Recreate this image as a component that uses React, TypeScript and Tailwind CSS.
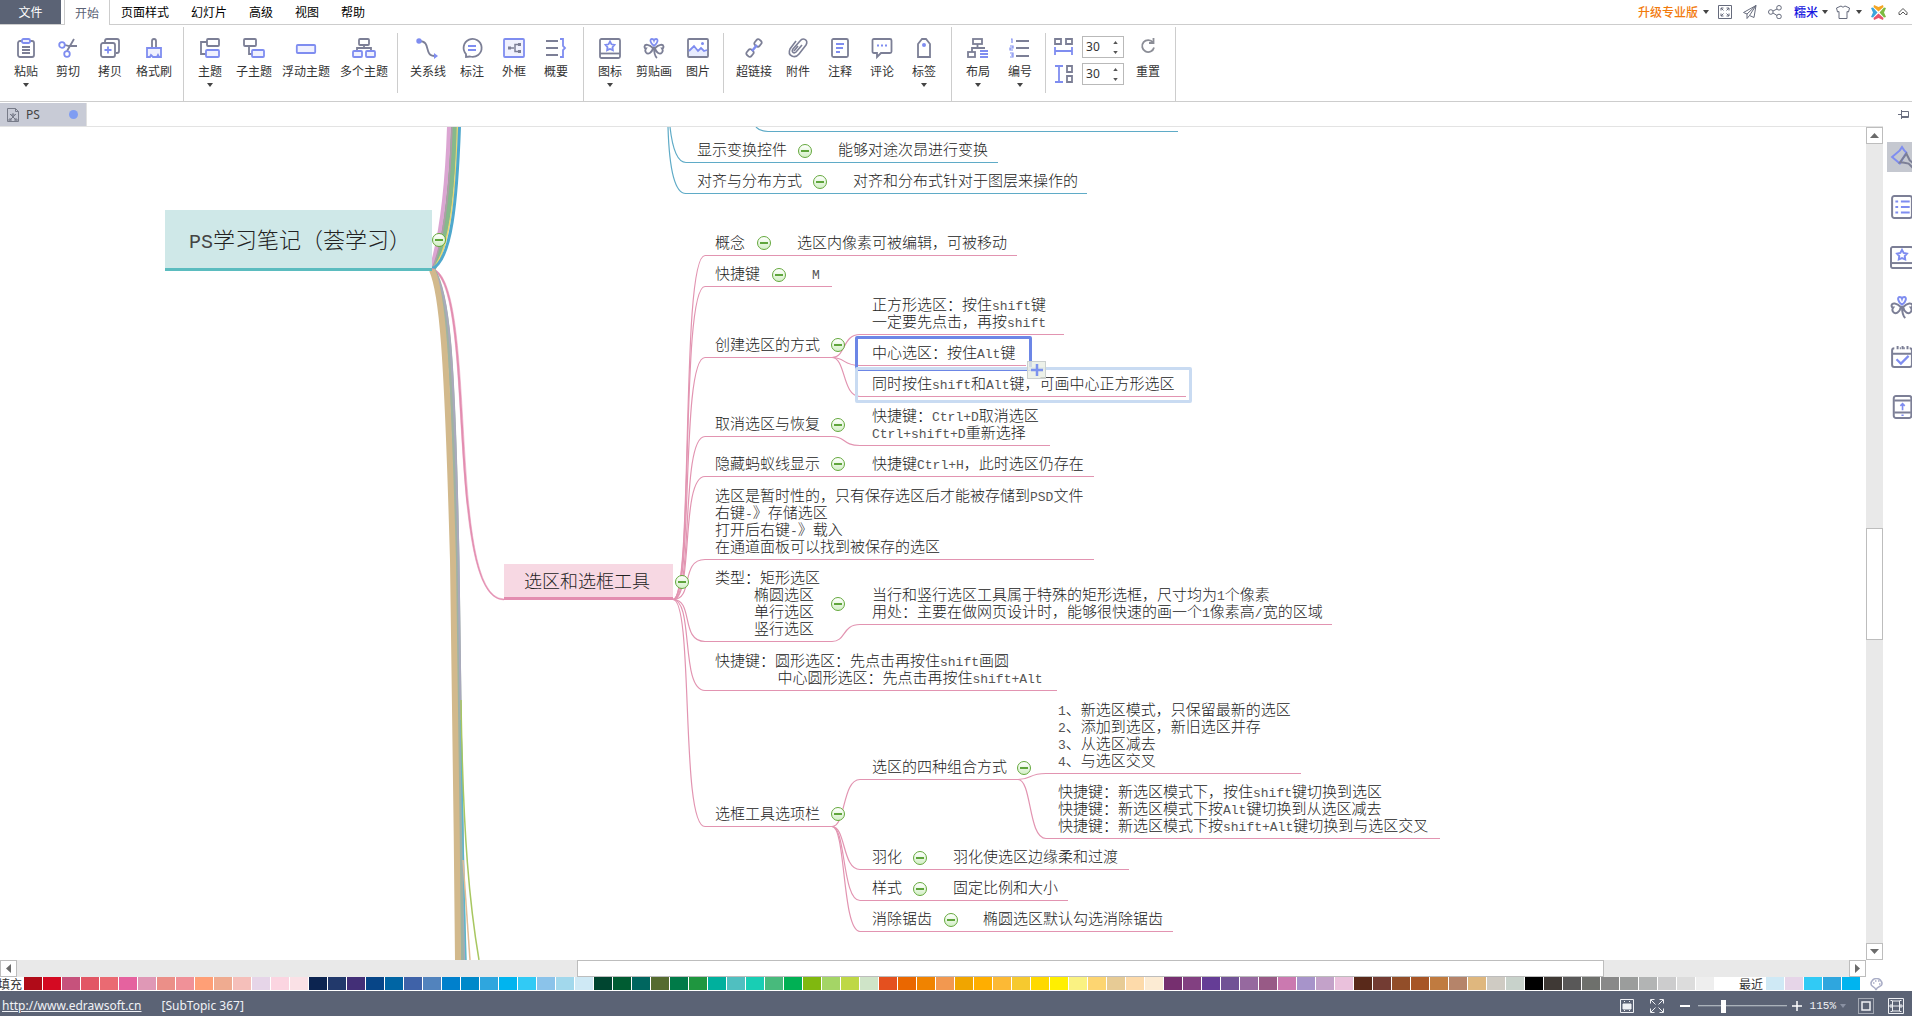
import { ReactNode } from "react";

const icons: Record<string, ReactNode> = {
  paste: (
    <>
      <rect x="2" y="3" width="16" height="16" rx="2" />
      <rect x="6" y="1" width="8" height="4" rx="1.5" fill="#f0f1fe" stroke="#7f8df0" />
      <path d="M6 9h8M6 12h8M6 15h8" />
    </>
  ),
  cut: (
    <>
      <path d="M16 1 9 13M19 8H11L7 7" />
      <circle cx="4" cy="7" r="2.8" stroke="#7f8df0" />
      <circle cx="9" cy="16" r="2.8" stroke="#7f8df0" />
    </>
  ),
  copy: (
    <>
      <path d="M5 5V3q0-2 2-2h10q2 0 2 2v10q0 2-2 2h-1" />
      <rect x="1" y="5" width="14" height="14" rx="2" />
      <path d="M8 8.500v7M4.500 12h7" stroke="#7f8df0" />
    </>
  ),
  format: (
    <>
      <path d="M8 9V3q0-2 2-2t2 2v6" />
      <path d="M3 10h14v9h-2l-1-2-1 2H9l-2-2-1 2H3z" fill="#f0f1fe" stroke="#7f8df0" />
    </>
  ),
  topic: (
    <>
      <path d="M7 4H1v12h5" />
      <rect x="7" y="1" width="12" height="7" rx="1" />
      <rect x="6" y="12" width="13" height="7" rx="1" fill="#f0f1fe" stroke="#7f8df0" />
    </>
  ),
  subtopic: (
    <>
      <path d="M5 8v8h3" />
      <rect x="0" y="1" width="12" height="7" rx="1" />
      <rect x="8" y="12" width="12" height="7" rx="1" fill="#f0f1fe" stroke="#7f8df0" />
    </>
  ),
  floating: <rect x="0.8" y="7" width="18.400" height="8" rx="1" fill="#f0f1fe" stroke="#7f8df0" />,
  multi: (
    <>
      <path d="M10 7v3M3 13v-3h14v3" />
      <rect x="5" y="1" width="10" height="6" rx="1" />
      <rect x="-1" y="13" width="9" height="6" rx="1" fill="#f0f1fe" stroke="#7f8df0" />
      <rect x="12" y="13" width="9" height="6" rx="1" fill="#f0f1fe" stroke="#7f8df0" />
    </>
  ),
  relation: (
    <>
      <path d="M1 3c13 0 4 15 16 15" />
      <circle cx="1" cy="3" r="1.800" fill="#7f8df0" stroke="#7f8df0" />
      <path d="M16 15l4 3-4 3z" fill="#7f8df0" stroke="none" />
    </>
  ),
  callout: (
    <>
      <path d="M4 19v-3a9 9 0 1 1 4 2.500z" />
      <path d="M6 8h8M6 12h8" stroke="#7f8df0" />
    </>
  ),
  boundary: (
    <>
      <rect x="0" y="1" width="20" height="18" rx="1" fill="#f0f1fe" stroke="#7f8df0" />
      <path d="M4 10h6M16 6.500h-5v7h5" strokeWidth="1.500" />
      <path d="M4 8.500h3v3H4zM14 5h3v3h-3zM14 12h3v3h-3z" fill="#7c7f96" stroke="none" />
    </>
  ),
  summary: (
    <>
      <path d="M0 3h12M0 10h12M0 17h12" />
      <path d="M14 1h3v7l2 2-2 2v7h-3" stroke="#7f8df0" />
    </>
  ),
  mark: (
    <>
      <rect x="0" y="1" width="20" height="19" rx="1.500" />
      <path d="M0 15.500h20" />
      <path d="m10 3.500 1.500 2.800 3 .6-2 2.300.4 3L10 11l-2.900 1.200.4-3-2-2.300 3-.6z" stroke="#7f8df0" />
    </>
  ),
  clipart: (
    <>
      <path d="M10 8C6 5 5.500 1 8 1q1.500 0 2 1.500Q10.500 1 12 1c2.500 0 2 4-2 7z" stroke="#7f8df0" />
      <path d="M9 10C5 6 1 6 .5 8.500q0 2 1.500 2-1.500 2 0 4C4 17 8 15 9 10zM11 10c4-4 8-4 8.500-1.500q0 2-1.500 2 1.500 2 0 4C16 17 12 15 11 10zM10 9c0 5 .5 9 3 11" />
    </>
  ),
  image: (
    <>
      <rect x="0" y="1" width="20" height="18" rx="1" />
      <path d="M1 13l5-5 4 5 3-3 3 3 3-1v6H1z" fill="#e8ecfe" stroke="none" />
      <path d="M1 13l5-5 4 5 3-3 3 3 3-1" stroke="#7f8df0" />
      <circle cx="14.500" cy="5.500" r="1.500" fill="#7f8df0" stroke="none" />
    </>
  ),
  link: (
    <>
      <rect x="-3.500" y="-3" width="7" height="6" rx="2" transform="translate(14 5) rotate(-50)" />
      <rect x="-3.500" y="-3" width="7" height="6" rx="2" transform="translate(6 15) rotate(-50)" />
      <path d="m8 13 5-6" stroke="#7f8df0" strokeWidth="2.500" />
    </>
  ),
  attach: (
    <path d="m14 7-6 7c-2 2-5 0-3-3l7-8c3-4 9-1 6 4l-7 9c-4 5-12 2-9-5l6-8M10 8l-4 5" strokeWidth="1.600" />
  ),
  note: (
    <>
      <rect x="2" y="1" width="16" height="18" rx="1.500" />
      <path d="M6 6h8M6 10h7M6 14h4" stroke="#7f8df0" />
    </>
  ),
  comment: (
    <>
      <path d="M2 1h16q1.500 0 1.500 1.500v11Q19.500 15 18 15H9l-4 4v-4H2Q.5 15 .5 13.500v-11Q.5 1 2 1z" />
      <path d="M5 7.500h2M9 7.500h2M13 7.500h2" stroke="#7f8df0" strokeWidth="2" />
    </>
  ),
  tag: (
    <>
      <path d="M4 19V6l4-5h4l4 5v13z" />
      <circle cx="10" cy="7" r="2" fill="#7f8df0" stroke="none" />
    </>
  ),
  layout: (
    <>
      <rect x="5" y="1" width="9" height="5" />
      <path d="M9.500 6v4M4 14v-4h13" />
      <rect x="0" y="14" width="7" height="5" />
      <path d="M12 13h8M12 16h8M12 19h8" stroke="#7f8df0" />
    </>
  ),
  numbering: (
    <>
      <path d="M6 3h13M6 10h13M6 18h13" />
      <path d="M1 1h1v4M0 8h3v2H0v2h3M0 15h3v4H0M1 17h2" stroke="#7f8df0" strokeWidth="1.200" />
    </>
  ),
  hspace: (
    <>
      <path d="M2 2h6v5H2zM13 2h6v5h-6z" />
      <path d="M2 10v8M19 10v8M2 14h17" stroke="#7f8df0" />
    </>
  ),
  vspace: (
    <>
      <path d="M14 2h5v6h-5zM14 12h5v6h-5z" />
      <path d="M2 2h8M2 18h8M6 2v16" stroke="#7f8df0" />
    </>
  ),
  reset: <path d="M15 4.500a6 6 0 1 0 1 5M15.500 0v5H11" stroke="#8b8d96" />,
  brush: (
    <>
      <path d="m1 10 7-6 2-3 2 3 2 2-6 10z" stroke="#7f8df0" />
      <path d="m8 15 6-8 3 6 6 5-2 3-5-5-5-1z" />
    </>
  ),
  list: (
    <>
      <rect x="1" y="0" width="18" height="20" rx="2" />
      <path d="M4 5h2.500M9 5h8M4 10h2.500M9 10h8M4 15h2.500M9 15h8" stroke="#7f8df0" />
    </>
  ),
  task: (
    <>
      <path d="M3 2Q1 2 1 4v13q0 2 2 2h14q2 0 2-2V4q0-2-2-2M1 7h18M8 2h1M11.500 2h1M6 0v3M10.500 0v3M15 0v3" />
      <path d="m5 12 4 4 7-7" stroke="#7f8df0" strokeWidth="2" />
    </>
  ),
  history: (
    <>
      <rect x="2.500" y="0" width="16" height="20" rx="2" />
      <path d="M3 4h15M3 15h15" />
      <path d="M10.500 13V7M8.500 9l2-2 2 2M9.500 17.500h2" stroke="#7f8df0" strokeWidth="1.500" />
    </>
  ),
};

const Icon = ({ name, large }: { name: string; large?: boolean }) => (
  <svg
    className={large ? "h-[22px] w-[22px] shrink-0 overflow-visible" : "h-5 w-5 shrink-0 overflow-visible"}
    viewBox="0 0 20 20"
    fill="none"
    stroke="#7c7f96"
    strokeWidth="1.800"
    aria-hidden="true"
  >
    {icons[name]}
  </svg>
);

const Caret = () => (
  <svg className="h-1 w-1.5 shrink-0" viewBox="0 0 6 4" aria-hidden="true">
    <path d="M0 0h6L3 4z" fill="#444" />
  </svg>
);

type Tool = { icon: string; label: string; menu?: boolean };

const ToolButton = ({ icon, label, menu }: Tool) => (
  <button className="flex min-w-[42px] flex-col items-center px-[5px] pt-[11px]">
    <Icon name={icon} />
    <span className="mt-[5px] leading-4">{label}</span>
    {menu && (
      <span className="mt-1">
        <Caret />
      </span>
    )}
  </button>
);

const Group = ({ children }: { children: ReactNode }) => (
  <div className="mt-0.5 flex shrink-0 items-start border-r border-[#cdcdcd] pl-[5px] pr-1.5">{children}</div>
);

const Divider = () => <div className="ml-1 mr-[7px] mt-1.5 h-15 w-px bg-[#cdcdcd]" />;

const clipboard: Tool[] = [
  { icon: "paste", label: "粘贴", menu: true },
  { icon: "cut", label: "剪切" },
  { icon: "copy", label: "拷贝" },
  { icon: "format", label: "格式刷" },
];
const topics: Tool[] = [
  { icon: "topic", label: "主题", menu: true },
  { icon: "subtopic", label: "子主题" },
  { icon: "floating", label: "浮动主题" },
  { icon: "multi", label: "多个主题" },
];
const relations: Tool[] = [
  { icon: "relation", label: "关系线" },
  { icon: "callout", label: "标注" },
  { icon: "boundary", label: "外框" },
  { icon: "summary", label: "概要" },
];
const pictures: Tool[] = [
  { icon: "mark", label: "图标", menu: true },
  { icon: "clipart", label: "剪贴画" },
  { icon: "image", label: "图片" },
];
const extras: Tool[] = [
  { icon: "link", label: "超链接" },
  { icon: "attach", label: "附件" },
  { icon: "note", label: "注释" },
  { icon: "comment", label: "评论" },
  { icon: "tag", label: "标签", menu: true },
];
const layouts: Tool[] = [
  { icon: "layout", label: "布局", menu: true },
  { icon: "numbering", label: "编号", menu: true },
];

const Tools = ({ items }: { items: Tool[] }) => (
  <>
    {items.map((t) => (
      <ToolButton key={t.label} {...t} />
    ))}
  </>
);

const Spacing = ({ icon, label }: { icon: string; label: string }) => (
  <div className="flex items-center gap-[9px]">
    <Icon name={icon} />
    <div className="flex h-[22px] w-[42px] border border-[#b9b9b9] bg-white">
      <input
        aria-label={label}
        defaultValue="30"
        className="w-6 pl-[3px] font-['Noto_Sans','Noto_Sans_CJK_SC',sans-serif] text-[12px] text-[#333] outline-none"
      />
      <div className="flex flex-1 flex-col items-center justify-around">
        <button className="rotate-180" aria-label={label + "增加"}>
          <svg className="h-[3px] w-[5px]" viewBox="0 0 6 4">
            <path d="M0 0h6L3 4z" fill="#555" />
          </svg>
        </button>
        <button aria-label={label + "减少"}>
          <svg className="h-[3px] w-[5px]" viewBox="0 0 6 4">
            <path d="M0 0h6L3 4z" fill="#555" />
          </svg>
        </button>
      </div>
    </div>
  </div>
);

const MenuBar = () => (
  <header className="flex h-[25px] shrink-0 border-b border-[#cdcdcd]">
    <button className="mr-[3px] w-[61px] bg-[#5b6375] text-white">文件</button>
    <nav className="flex text-black">
      <button className="-mb-px border-x border-[#cdcdcd] bg-white px-2.5 text-[#5b6375]">开始</button>
      <button className="px-[11px]">页面样式</button>
      <button className="px-[11px]">幻灯片</button>
      <button className="px-[11px]">高级</button>
      <button className="px-[11px]">视图</button>
      <button className="px-[11px]">帮助</button>
    </nav>
    <div className="ml-auto flex items-center pr-1">
      <button className="mr-[9px] flex items-center gap-[5px] font-medium text-[#f27a0c]">
        升级专业版
        <Caret />
      </button>
      <div className="flex items-center gap-[11px]">
        <button aria-label="全屏">
          <svg className="h-3.5 w-3.5" viewBox="0 0 14 14" fill="none" stroke="#666b7c">
            <path d="M.5.5h13v13H.5zM3 5.500V3h2.500M8.500 3H11v2.500M11 8.500V11H8.500M5.500 11H3V8.500M3 3l2.500 2.500M11 3 8.500 5.500M11 11 8.500 8.500M3 11l2.500-2.500" />
          </svg>
        </button>
        <button aria-label="发送">
          <svg className="h-3.5 w-3.5" viewBox="0 0 14 14" fill="none" stroke="#666b7c">
            <path d="M13 .5.5 7.500 4 9v4.500l2.500-3 4.500 2zM4 9l9-8.500L6.500 10.500" />
          </svg>
        </button>
        <button aria-label="分享">
          <svg className="h-3.5 w-3.5" viewBox="0 0 14 14" fill="none" stroke="#666b7c">
            <circle cx="2.800" cy="7" r="2.300" />
            <circle cx="11" cy="2.800" r="2.300" />
            <circle cx="11" cy="11.500" r="2.300" />
            <path d="m5 6 4-2M5 8l4 2.500" />
          </svg>
        </button>
      </div>
      <button className="ml-3 flex items-center gap-1 font-medium text-[#1414e0]">
        糯米
        <Caret />
      </button>
      <button className="ml-2 flex items-center gap-1.5" aria-label="皮肤">
        <svg className="h-3.5 w-3.5" viewBox="0 0 14 14" fill="none" stroke="#666b7c">
          <path d="M5 1Q7 3.500 9 1l4.500 2-1 4-1.500-.5v7H3v-7L1.500 7l-1-4z" />
        </svg>
        <Caret />
      </button>
      <button className="ml-[9px]" aria-label="亿图">
        <svg className="h-[15px] w-[15px]" viewBox="0 0 15 15">
          <path d="M3 0 7.500 2 12 0l.5 2-5 4.500L2.500 2z" fill="#f5a623" />
          <path d="m3 15 4.500-2 4.500 2 .5-2-5-4.500-5 4.500z" fill="#e8546b" />
          <path d="m0 3 2 4.500L0 12l2 .5 4.500-5L2 2.500z" fill="#3ba5dc" />
          <path d="m15 3-2 4.500 2 4.500-2 .5-4.500-5 4.500-5z" fill="#7dbb42" />
        </svg>
      </button>
      <button className="ml-3" aria-label="收起功能区">
        <svg className="h-2.5 w-2.5" viewBox="0 0 10 10" fill="none" stroke="#555">
          <path d="m5 1.500 4 4v2H7.500L5 5 2.500 7.500H1v-2z" />
        </svg>
      </button>
    </div>
  </header>
);

const Ribbon = () => (
  <div className="flex h-[77px] shrink-0 border-b border-[#cdcdcd] text-[#333]">
    <Group>
      <Tools items={clipboard} />
    </Group>
    <Group>
      <Tools items={topics} />
      <Divider />
      <Tools items={relations} />
    </Group>
    <Group>
      <Tools items={pictures} />
      <Divider />
      <Tools items={extras} />
    </Group>
    <Group>
      <Tools items={layouts} />
      <Divider />
      <div className="flex flex-col gap-[5px] pt-[9px]">
        <Spacing icon="hspace" label="水平间距" />
        <Spacing icon="vspace" label="垂直间距" />
      </div>
      <div className="ml-[3px] flex">
        <ToolButton icon="reset" label="重置" />
      </div>
    </Group>
  </div>
);

// text is placed by its left edge and by the underline that it stands on
const nodes: [number, number, string][] = [
  [697, 35, "显示变换控件"],
  [838, 35, "能够对途次昂进行变换"],
  [697, 66, "对齐与分布方式"],
  [853, 66, "对齐和分布式针对于图层来操作的"],
  [715, 128, "概念"],
  [797, 128, "选区内像素可被编辑，可被移动"],
  [715, 159, "快捷键"],
  [812, 159, "M"],
  [715, 230, "创建选区的方式"],
  [872, 207, "正方形选区：按住shift键\n一定要先点击，再按shift"],
  [872, 238, "中心选区：按住Alt键"],
  [872, 269, "同时按住shift和Alt键，可画中心正方形选区"],
  [715, 309, "取消选区与恢复"],
  [872, 318, "快捷键：Ctrl+D取消选区\nCtrl+shift+D重新选择"],
  [715, 349, "隐藏蚂蚁线显示"],
  [872, 349, "快捷键Ctrl+H，此时选区仍存在"],
  [715, 432, "选区是暂时性的，只有保存选区后才能被存储到PSD文件\n右键-》存储选区\n打开后右键-》载入\n在通道面板可以找到被保存的选区"],
  [715, 514, "类型：矩形选区\n     椭圆选区\n     单行选区\n     竖行选区"],
  [872, 497, "当行和竖行选区工具属于特殊的矩形选框，尺寸均为1个像素\n用处：主要在做网页设计时，能够很快速的画一个1像素高/宽的区域"],
  [715, 563, "快捷键：圆形选区：先点击再按住shift画圆\n        中心圆形选区：先点击再按住shift+Alt"],
  [715, 699, "选框工具选项栏"],
  [872, 652, "选区的四种组合方式"],
  [1058, 646, "1、新选区模式，只保留最新的选区\n2、添加到选区，新旧选区并存\n3、从选区减去\n4、与选区交叉"],
  [1058, 711, "快捷键：新选区模式下，按住shift键切换到选区\n快捷键：新选区模式下按Alt键切换到从选区减去\n快捷键：新选区模式下按shift+Alt键切换到与选区交叉"],
  [872, 742, "羽化"],
  [953, 742, "羽化使选区边缘柔和过渡"],
  [872, 773, "样式"],
  [953, 773, "固定比例和大小"],
  [872, 804, "消除锯齿"],
  [983, 804, "椭圆选区默认勾选消除锯齿"],
];

// x, y of each collapse button's centre
const toggles = [
  [439, 113], [805, 24], [820, 55], [764, 116], [779, 148], [838, 218], [838, 298],
  [838, 337], [682, 455], [838, 477], [838, 687], [1024, 641], [920, 731], [920, 762], [951, 793],
];

// underline y, right end
const branches = [
  [128, 1017], [159, 832], [230, 832], [309, 832], [349, 1094],
  [432, 1094], [514, 832], [563, 1057], [699, 832],
];

// from x, from y, to x, to y, right end
const leaves = [
  [832, 230, 860, 207, 1064],
  [832, 230, 860, 238, 1026],
  [832, 230, 860, 269, 1186],
  [832, 309, 860, 318, 1050],
  [832, 514, 860, 497, 1332],
  [832, 699, 860, 652, 1018],
  [832, 699, 860, 742, 1129],
  [832, 699, 860, 773, 1068],
  [832, 699, 860, 804, 1173],
  [1018, 652, 1046, 646, 1301],
  [1018, 652, 1046, 711, 1440],
];

const Connectors = () => (
  <svg className="absolute left-0 top-0 h-full w-full" fill="none" aria-hidden="true">
    <path d="M432 142C447 118 452 60 454 0" stroke="#86b98c" strokeWidth="7" />
    <path d="M431 142C441 110 447 60 449 0" stroke="#dba5d2" strokeWidth="4" />
    <path d="M432 142C444 115 450 60 452 0" stroke="#b09ba8" strokeWidth="1.500" />
    <path d="M432 142C451 125 456 60 457.500 0" stroke="#ecd873" strokeWidth="1.500" />
    <path d="M431 142C452 136 457 70 459.500 0" stroke="#4fa8cc" strokeWidth="3" />
    <path d="M430 141C480 143 445 472 504 472V473C443 473 477 146 430 143Z" fill="#e38db0" stroke="#e38db0" strokeWidth="0.500" />
    <path d="M433 143C447 165 453 220 457 433C458 560 461 700 463 833" stroke="#9fb3a2" strokeWidth="5" />
    <path d="M433 143C449 165 454 220 458.500 433C460 560 463 740 465 833" stroke="#a9a9bd" strokeWidth="2" />
    <path d="M432 143C442 165 447 220 453 433C455 600 457 700 458 833" stroke="#d2b98c" strokeWidth="6" />
    <path d="M461 593Q463 740 466 833" stroke="#5cb8c9" strokeWidth="1.500" />
    <path d="M463 733Q467 790 470 833" stroke="#e2bd95" strokeWidth="1.500" />
    <path d="M461 573C463 713 470 780 479 833" stroke="#a8c761" strokeWidth="1.500" />
    <g stroke="#5fabc7" strokeWidth="1.200">
      <path d="M756 0Q760 4.500 768 4.500H1178" />
      <path d="M670 0Q674 35.500 686 35.500H998" />
      <path d="M668 0Q670 67 686 66.500H1087" />
    </g>
    <g stroke="#e294b1" strokeWidth="1.200">
      {branches.map(([y, end]) => (
        <path key={y} d={`M673 472.5C694 472.5 680 ${y + 0.5} 705 ${y + 0.5}H${end}`} />
      ))}
      {leaves.map(([x, y, x2, y2, end]) => (
        <path
          key={x + "-" + y2}
          d={`M${x} ${y + 0.5}C${x + 14} ${y + 0.5} ${x + 10} ${y2 + 0.5} ${x2} ${y2 + 0.5}H${end}`}
        />
      ))}
    </g>
  </svg>
);

// latin runs take a narrower face so that two letters fill about one ideograph
const Mixed = ({ text }: { text: string }) => (
  <>
    {text.split(/([\x20-\x7e]+)/).map((part, i) =>
      i % 2 ? (
        <span key={i} className="font-['Liberation_Mono',monospace] text-[13px] text-[#555]">
          {part}
        </span>
      ) : (
        part
      )
    )}
  </>
);

const MindMap = () => (
  <main className="relative min-w-0 flex-1 overflow-hidden bg-white font-['Noto_Sans_CJK_SC',sans-serif] font-light text-[#222]">
    <Connectors />
    <div className="absolute left-[165px] top-[83px] h-[61px] w-[267px] whitespace-nowrap border-b-3 border-[#5bbcbf] bg-[#cfe8e8] pl-6 text-[22px] leading-[56px]">
      <span className="font-['Liberation_Mono',monospace] text-[20px] text-[#444]">PS</span>学习笔记（荟学习）
    </div>
    <div className="absolute left-[504px] top-[437px] h-9 w-[169px] whitespace-nowrap border-b-3 border-[#e38db0] bg-[#f7d8e3] pl-5 text-lg leading-8">
      选区和选框工具
    </div>
    <div className="absolute left-[855px] top-[209px] h-[35px] w-[177px] rounded-xs border-3 border-[#6c86e6]"></div>
    <div className="absolute left-[855px] top-60 h-9 w-[337px] rounded-xs border-3 border-[#c9dbf2]"></div>
    {nodes.map(([x, y, text]) => (
      <div
        key={x + "-" + y}
        className="absolute -translate-y-full whitespace-pre pb-[5px] text-[15px] leading-[17px]"
        style={{ left: x, top: y }}
      >
        {text.split("\n").map((line) => (
          <div key={line} className="h-[17px]">
            <Mixed text={line} />
          </div>
        ))}
      </div>
    ))}
    {toggles.map(([x, y]) => (
      <button
        key={x + "-" + y}
        aria-label="折叠"
        className="absolute flex h-3.5 w-3.5 -translate-x-1/2 -translate-y-1/2 items-center justify-center rounded-full border border-[#64a83c] bg-linear-to-b from-white to-[#d3efc6]"
        style={{ left: x, top: y }}
      >
        <span className="h-0.5 w-2 bg-[#5fa53c]"></span>
      </button>
    ))}
    <button
      aria-label="添加主题"
      className="absolute left-[1027px] top-[234px] flex h-[18px] w-[19px] items-center justify-center border border-[#cbd0cf] bg-[#e8ede4]/80"
    >
      <svg className="h-3 w-3" viewBox="0 0 12 12">
        <path d="M6 0v12M0 6h12" stroke="#7d93ee" strokeWidth="2.500" />
      </svg>
    </button>
  </main>
);

const arrows = {
  up: "M0 7h9L4.500 2z",
  down: "M0 2h9L4.500 7z",
  left: "M7 0v9L2 4.500z",
  right: "M2 0v9l5-4.500z",
};

const ScrollButton = ({ dir, label }: { dir: keyof typeof arrows; label: string }) => (
  <button
    aria-label={label}
    className="flex h-[17px] w-[17px] shrink-0 items-center justify-center border border-[#bdbdbd] bg-white"
  >
    <svg className="h-[9px] w-[9px]" viewBox="0 0 9 9">
      <path d={arrows[dir]} fill="#6b6b6b" />
    </svg>
  </button>
);

const Workspace = () => (
  <div className="flex min-w-0 flex-1 flex-col">
    <div className="flex h-[25px] shrink-0 items-end border-b border-[#e3e3e3]">
      <button className="flex h-[23px] w-[87px] items-center border-r border-[#e0e0e0] bg-[#c8cbd6] pl-[7px] pr-2 text-[#444]">
        <svg className="h-3.5 w-3" viewBox="0 0 12 14" fill="none" stroke="#777b88">
          <path d="M.5.500h8l3 3v10H.5zM8.500.5v3h3M3 6l6 6M9 6l-6 6M5 6h2v2H5zM2 11h2v2H2zM8 11h2v2H8z" />
        </svg>
        <span className="ml-[7px] font-['Noto_Sans',sans-serif] text-[12px]">PS</span>
        <span className="ml-auto h-[9px] w-[9px] rounded-full bg-[#7f9df2]"></span>
      </button>
    </div>
    <div className="flex min-h-0 flex-1">
      <MindMap />
      <div className="flex w-[17px] flex-col bg-[#e9e9e9]">
        <ScrollButton dir="up" label="向上滚动" />
        <div className="flex-[385]"></div>
        <div className="flex-[110] border border-[#bdbdbd] bg-white"></div>
        <div className="flex-[304]"></div>
        <ScrollButton dir="down" label="向下滚动" />
      </div>
    </div>
    <div className="mr-[17px] flex h-[17px] shrink-0 bg-[#e9e9e9]">
      <ScrollButton dir="left" label="向左滚动" />
      <div className="flex-[561]"></div>
      <div className="flex-[1027] border border-[#bdbdbd] bg-white"></div>
      <div className="flex-[245]"></div>
      <ScrollButton dir="right" label="向右滚动" />
    </div>
  </div>
);

const panels = [
  ["list", "大纲"],
  ["mark", "图标"],
  ["clipart", "剪贴画"],
  ["task", "任务"],
  ["history", "历史"],
];

const SidePanel = () => (
  <aside className="flex w-[29px] shrink-0 flex-col gap-5 overflow-hidden pl-1">
    <button className="ml-[11px] h-5 pt-1" aria-label="固定">
      <svg className="h-[9px] w-[11px]" viewBox="0 0 11 9" fill="none" stroke="#6b6f80">
        <path d="M0 4.500h3.500M3.500 0v9M3.500 1.500h7v6h-7M4 6.500h6" />
      </svg>
    </button>
    <button className="h-[30px] bg-[#c5c8d0] pl-1" aria-label="样式">
      <Icon name="brush" large />
    </button>
    {panels.map(([icon, label]) => (
      <button key={label} className="h-[30px] pl-1" aria-label={label}>
        <Icon name={icon} large />
      </button>
    ))}
  </aside>
);

const colors =
  "b00b18 d40a22 c6527c e25765 ea6a72 e5629f df98b6 eb8f88 f09198 ff9f76 efab90 f5bfba e6d5e8 fbd5e1 fae1e6 " +
  "0c2450 22396b 432f77 074587 0065a4 3f62a8 5283bd 0080cc 0089ca 2fa6de 00b4ef 31caf5 8bc3ea a2d8ec cfe9f5 " +
  "004530 005c32 00665f 556b2f 007a48 1f963f 00b09d 50bfc0 18ceb4 48ba7c 00b054 80b80f a4d566 bed846 cfe4c8 " +
  "e4501f ea6700 f08300 f29850 f0a500 ffae00 fcb935 f6c92f ffd900 ffef00 faf282 fdd571 e7cb95 fddaaa fcebd3 " +
  "762f6f 824081 653d96 715396 96699f 985a86 cb79b0 a794ca c3a2c9 eac1dc " +
  "59291a 733c33 924e29 a75526 c07b40 b5846a dfb77e cfcbc3 c8d2cb " +
  "000000 3f3935 595858 6e706c 898989 9b9d9c b2b4b4 cccccd dcdcdc eeeeee";
const recent = "cfe9f5 e6d5e8 31caf5 2fa6de 00b4ef";

const Swatches = ({ list }: { list: string }) => (
  <>
    {list.split(" ").map((c) => (
      <button
        key={c}
        aria-label={"#" + c}
        className="h-[13px] w-[19px] shrink-0 border-r border-white"
        style={{ backgroundColor: "#" + c }}
      />
    ))}
  </>
);

const Palette = () => (
  <div className="flex h-3.5 shrink-0 bg-white leading-[14px] text-[#333]">
    <span className="-ml-0.5 w-[26px] shrink-0">填充</span>
    <Swatches list={colors} />
    <span className="ml-6 w-[27px] shrink-0">最近</span>
    <Swatches list={recent} />
    <button className="ml-[9px] shrink-0" aria-label="更多颜色">
      <svg className="h-[13px] w-[13px]" viewBox="0 0 13 13" fill="none" stroke="#a9adc6" strokeWidth="1.500">
        <path d="M6 12C7 8 12 9 12 6a5.500 5.500 0 1 0-11 0c0 3 4 2 5 6z" />
        <path d="M3 5h1.500M5 3h1.500M8 3h1.500M9 6h1.500" />
      </svg>
    </button>
  </div>
);

const StatusBar = () => (
  <footer className="flex h-[25px] shrink-0 items-center bg-[#5b6375] pl-0.5 pr-2 pt-[5px] font-['Noto_Sans',sans-serif] text-[12px] leading-4 text-[#f0f2f6]">
    <a href="#" className="underline">
      http://www.edrawsoft.cn
    </a>
    <span className="ml-5">[SubTopic 367]</span>
    <div className="ml-auto flex items-center">
      <button aria-label="演示">
        <svg className="h-3.5 w-3.5" viewBox="0 0 14 14" fill="none" stroke="#eef0f4">
          <path d="M.5.5h13v13H.5z" />
          <path d="M3 5h8v5H3z" fill="#eef0f4" />
          <path d="M4 2.500h1M9 2.500h1M4 11.500h1M9 11.500h1" />
        </svg>
      </button>
      <button aria-label="适应窗口" className="ml-4">
        <svg className="h-3.5 w-3.5" viewBox="0 0 14 14" fill="none" stroke="#eef0f4">
          <path d="M.5 4.500v-4h4M9.500.5h4v4M13.500 9.500v4h-4M4.500 13.500h-4v-4M1 1l4.500 4.500M13 1 8.500 5.500M13 13 8.500 8.500M1 13l4.500-4.500" />
        </svg>
      </button>
      <button aria-label="缩小" className="ml-4 flex h-2.5 w-2.5 items-center">
        <span className="h-0.5 w-full bg-white"></span>
      </button>
      <input
        type="range"
        aria-label="缩放"
        defaultValue="28"
        className="ml-2 h-3.5 w-[89px] appearance-none bg-linear-to-b from-transparent from-43% via-[#c4ccd0] via-43% to-transparent to-57% [&::-webkit-slider-thumb]:h-[13px] [&::-webkit-slider-thumb]:w-[5px] [&::-webkit-slider-thumb]:appearance-none [&::-webkit-slider-thumb]:bg-white"
      />
      <button aria-label="放大" className="ml-[5px]">
        <svg className="h-2.5 w-2.5" viewBox="0 0 10 10">
          <path d="M5 0v10M0 5h10" stroke="#fff" strokeWidth="1.500" />
        </svg>
      </button>
      <button className="ml-2 flex items-center gap-1 font-['Liberation_Mono',monospace] text-[11px]">
        115%
        <svg className="h-1 w-1.5" viewBox="0 0 6 4">
          <path d="M0 0h6L3 4z" fill="#8a91a3" />
        </svg>
      </button>
      <button aria-label="整页" className="ml-3">
        <svg className="h-4 w-4" viewBox="0 0 16 16" fill="none" stroke="#eef0f4">
          <path d="M.5.5h15v15H.5z" strokeDasharray="1 1" />
          <path d="M4 4h8v8H4z" strokeWidth="1.500" />
        </svg>
      </button>
      <button aria-label="页宽" className="ml-3.5">
        <svg className="h-4 w-4" viewBox="0 0 16 16" fill="none" stroke="#eef0f4">
          <path d="M.5.5h15v15H.5zM4.500 3h7v10h-7zM1 8h14M3 6v4M13 6v4M2.500 2.500h2M11.500 2.500h2M2.500 13.500h2M11.500 13.500h2" />
        </svg>
      </button>
    </div>
  </footer>
);

const App = () => {
  return (
    <div className="flex h-screen flex-col overflow-hidden bg-white font-['Noto_Sans_CJK_SC',sans-serif] text-[12px] leading-4">
      <MenuBar />
      <Ribbon />
      <div className="flex min-h-0 flex-1">
        <Workspace />
        <SidePanel />
      </div>
      <Palette />
      <StatusBar />
    </div>
  );
};

export default App;
